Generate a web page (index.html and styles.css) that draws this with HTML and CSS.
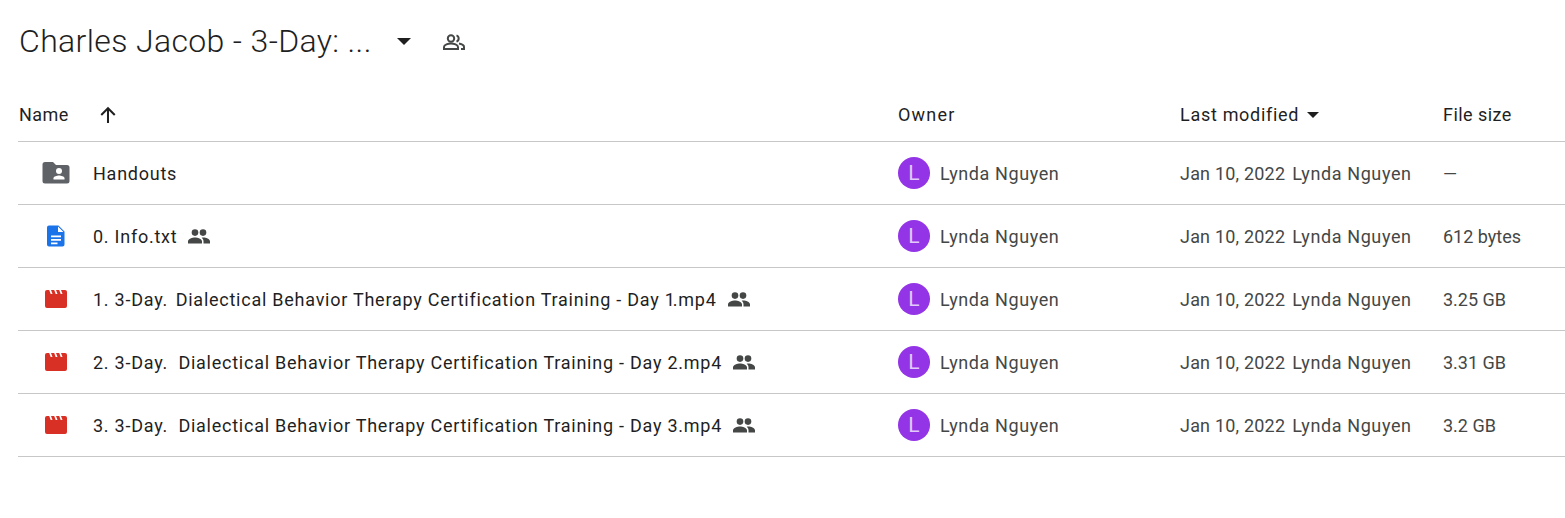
FILE: index.html
```html
<!DOCTYPE html>
<html lang="en">
<head>
<meta charset="utf-8">
<title>Charles Jacob - 3-Day</title>
<link rel="stylesheet" href="styles.css">
</head>
<body>
<svg class="defs" width="0" height="0" aria-hidden="true">
  <symbol id="people" viewBox="0 0 22 15"><circle cx="7" cy="3.600" r="3.300"/><circle cx="15" cy="3.600" r="3.300"/><path d="M0 14.500v-2.200C0 9.800 4.500 8.400 7 8.400s7 1.400 7 3.900v2.200zM15.500 14.500v-2.200c0-1.500-.7-2.700-1.800-3.500.5-.2 1.100-.4 1.800-.4 2.300 0 6.500 1.400 6.500 3.900v2.200z"/></symbol>
  <symbol id="video" viewBox="0 0 22 18"><path d="M2 0h2.200l1.500 4h1.800L6 0h3.200l1.500 4h1.800L11 0h3.200l1.500 4h1.800L16 0h4a2 2 0 0 1 2 2v14a2 2 0 0 1-2 2H2a2 2 0 0 1-2-2V2a2 2 0 0 1 2-2z"/></symbol>
</svg>
<header class="title-bar">
  <h1 class="title">Charles Jacob - 3-Day: ...</h1>
  <svg class="caret-lg" viewBox="0 0 14 7"><path d="M0 0h14L7 7z"/></svg>
  <svg class="shared-outline" viewBox="0 0 22 16" fill="none" stroke="#444746" stroke-width="2"><circle cx="8" cy="4.500" r="3.200"/><path d="M1 15v-2c0-2.300 4.300-3.600 7-3.600s7 1.300 7 3.600v2zM13.500 1.400a3.300 3.300 0 0 1 0 6.200M16 9.600c2.700.5 5 1.500 5 3.400v2h-3"/></svg>
</header>
<main class="table">
  <div class="row head">
    <div class="name-head"><span>Name</span>
      <svg class="arrow" viewBox="0 0 16 16" fill="none" stroke="#1f1f1f" stroke-width="1.800"><path d="M8 15V2M2 8l6-6 6 6"/></svg>
    </div>
    <div class="wide">Owner</div>
    <div class="mod-head"><span>Last modified</span><svg class="caret-sm" viewBox="0 0 12 6"><path d="M0 0h12L6 6z"/></svg></div>
    <div>File size</div>
  </div>

  <div class="row">
    <div class="name">
      <span class="ico"><svg width="28" height="22" viewBox="0 0 28 22"><path fill="#5f6368" d="M3 0h8l3 3h11a2.500 2.500 0 0 1 2.500 2.500V19a2.500 2.500 0 0 1-2.500 2.500H3A2.500 2.500 0 0 1 .5 19V2.500A2.500 2.500 0 0 1 3 0z"/><circle cx="17" cy="9" r="3" fill="#fff"/><path fill="#fff" d="M11.500 17.500v-1.300c0-1.700 3.600-2.700 5.500-2.700s5.500 1 5.500 2.700v1.300z"/></svg></span>
      <span>Handouts</span>
    </div>
    <div class="owner"><span class="avatar">L</span><span>Lynda Nguyen</span></div>
    <div class="mod"><span class="date">Jan 10, 2022</span><span>Lynda Nguyen</span></div>
    <div class="size">—</div>
  </div>

  <div class="row">
    <div class="name">
      <span class="ico"><svg width="18" height="22" viewBox="0 0 18 22"><path fill="#1a73e8" d="M2 .500h9.500L17.500 6.500V19.500a2 2 0 0 1-2 2H2a2 2 0 0 1-2-2v-17a2 2 0 0 1 2-2z"/><path fill="#fff" d="M11 1.500v5.500h5.500zM4 10.500h10v1.800H4zM4 14h10v1.800H4zM4 17.500h6.500v1.800H4z"/></svg></span>
      <span>0. Info.txt</span>
      <svg class="people"><use href="#people"/></svg>
    </div>
    <div class="owner"><span class="avatar">L</span><span>Lynda Nguyen</span></div>
    <div class="mod"><span class="date">Jan 10, 2022</span><span>Lynda Nguyen</span></div>
    <div class="size">612 bytes</div>
  </div>

  <div class="row">
    <div class="name">
      <span class="ico"><svg class="video"><use href="#video"/></svg></span>
      <span>1. 3-Day.<span class="tight">&nbsp;</span> Dialectical Behavior Therapy Certification Training - Day <span class="tight">1</span>.mp4</span>
      <svg class="people"><use href="#people"/></svg>
    </div>
    <div class="owner"><span class="avatar">L</span><span>Lynda Nguyen</span></div>
    <div class="mod"><span class="date">Jan 10, 2022</span><span>Lynda Nguyen</span></div>
    <div class="size">3.25 GB</div>
  </div>

  <div class="row">
    <div class="name">
      <span class="ico"><svg class="video"><use href="#video"/></svg></span>
      <span>2. 3-Day.&nbsp; Dialectical Behavior Therapy Certification Training - Day 2.mp4</span>
      <svg class="people"><use href="#people"/></svg>
    </div>
    <div class="owner"><span class="avatar">L</span><span>Lynda Nguyen</span></div>
    <div class="mod"><span class="date">Jan 10, 2022</span><span>Lynda Nguyen</span></div>
    <div class="size">3.31 GB</div>
  </div>

  <div class="row">
    <div class="name">
      <span class="ico"><svg class="video"><use href="#video"/></svg></span>
      <span>3. 3-Day.&nbsp; Dialectical Behavior Therapy Certification Training - Day 3.mp4</span>
      <svg class="people"><use href="#people"/></svg>
    </div>
    <div class="owner"><span class="avatar">L</span><span>Lynda Nguyen</span></div>
    <div class="mod"><span class="date">Jan 10, 2022</span><span>Lynda Nguyen</span></div>
    <div class="size">3.2 GB</div>
  </div>
</main>
</body>
</html>
```
FILE: styles.css
```css
* { box-sizing: border-box; }
html, body { margin: 0; background: #fff; overflow: hidden; }
body {
  height: 518px;
  font-family: Roboto, "Liberation Sans", sans-serif;
  font-size: 18px;
  color: #1f1f1f;
}
.defs { position: absolute; }
.title-bar {
  height: 78px;
  padding: 4px 0 0 19px;
  display: flex;
  align-items: center;
}
.title {
  margin: 0;
  font-size: 32px;
  font-weight: 300;
  letter-spacing: .36px;
  color: #1f1f1f;
  width: 378px;
  white-space: nowrap;
}
.caret-lg { width: 14px; height: 7px; fill: #1f1f1f; }
.shared-outline { width: 22px; height: 16px; margin: 2px 0 0 32px; }
.table { margin-left: 18px; }
.row {
  display: grid;
  grid-template-columns: 880px 282px 263px 1fr;
  height: 63px;
  align-items: center;
  border-bottom: 1px solid #c7c7c7;
  letter-spacing: .6px;
}
.row.head { height: 64px; padding-top: 10px; color: #1f1f1f; letter-spacing: .45px; }
.name-head { display: flex; align-items: center; padding-left: 1px; }
.arrow { width: 18px; height: 18px; margin-left: 30px; }
.wide { letter-spacing: 1.2px; }
.mod-head { display: flex; align-items: center; gap: 8px; letter-spacing: .7px; }
.caret-sm { width: 12px; height: 6px; fill: #1f1f1f; }
.name { display: flex; align-items: center; white-space: nowrap; letter-spacing: .75px; }
.tight { letter-spacing: -2px; }
.ico { width: 75px; display: flex; justify-content: center; }
.video { width: 22px; height: 18px; fill: #d93025; }
.people { width: 22px; height: 15px; margin-left: 11px; fill: #444746; }
.owner { display: flex; align-items: center; gap: 10px; color: #444746; }
.avatar {
  width: 32px;
  height: 32px;
  border-radius: 50%;
  background: #9334e6;
  color: #e3c9fa;
  display: flex;
  align-items: center;
  justify-content: center;
  font-size: 21px;
  letter-spacing: 0;
}
.mod { display: flex; gap: 7px; color: #444746; white-space: nowrap; }
.date { letter-spacing: .2px; }
.size { color: #444746; letter-spacing: 0; }
```
